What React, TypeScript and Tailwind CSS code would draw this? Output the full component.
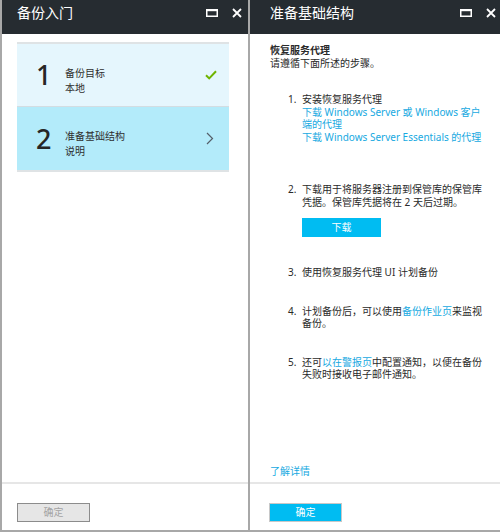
import type { ReactNode } from 'react'

const font = { fontFamily: '"Noto Sans", "Noto Sans CJK SC", sans-serif' }

function PanelHeader({ title, padLeft }: { title: string; padLeft: string }) {
  return (
    <div className={`flex h-[34px] shrink-0 items-center justify-between bg-[#262c31] pr-[6px] ${padLeft}`}>
      <span className="text-[14px] leading-[18px] text-white -mt-[8px]">{title}</span>
      <div className="flex items-center gap-[14px] -mt-[8px]">
        <svg width="12" height="8" viewBox="0 0 12 8">
          <rect x="0.75" y="0.75" width="10.5" height="6.5" fill="none" stroke="#fff" strokeWidth="1.5" />
          <rect x="0" y="0" width="12" height="2.2" fill="#fff" />
        </svg>
        <svg width="10" height="10" viewBox="0 0 10 10">
          <path d="M1 1L9 9M9 1L1 9" stroke="#fff" strokeWidth="1.8" />
        </svg>
      </div>
    </div>
  )
}

function Footer({ children, padLeft }: { children: ReactNode; padLeft: string }) {
  return (
    <div className={`h-[48px] shrink-0 border-t-2 border-[#e6e6e6] pt-[14px] ${padLeft}`}>{children}</div>
  )
}

function StepCard({
  num,
  title,
  sub,
  bg,
  icon,
}: {
  num: string
  title: string
  sub: string
  bg: string
  icon: ReactNode
}) {
  return (
    <div className={`flex h-[63px] items-center pl-[19px] pr-[12px] ${bg}`}>
      <span className="w-[29px] text-[27px] font-medium leading-[30px] text-[#262626]">{num}</span>
      <div className="flex-1 pt-[11px] text-[10px] leading-[15px] text-[#2e2e2e]">
        <div>{title}</div>
        <div>{sub}</div>
      </div>
      {icon}
    </div>
  )
}

function Item({ n, children, className = '' }: { n: string; children: ReactNode; className?: string }) {
  return (
    <li className={`flex ${className}`}>
      <span className="w-[14px] shrink-0">{n}</span>
      <div className="whitespace-nowrap">{children}</div>
    </li>
  )
}

const link = 'text-[#17a9e1]'

export default function App() {
  return (
    <div style={font} className="flex h-[532px] w-[500px] border-b-2 border-[#a8a8a8] bg-white">
      {/* left blade */}
      <div className="flex w-[250px] shrink-0 flex-col border-x-2 border-[#a8a8a8]">
        <PanelHeader title="备份入门" padLeft="pl-[15px]" />
        <div className="flex-1 px-[15px] pt-[8px]">
          <div className="w-[212px] border-y-2 border-[#dfe3e5]">
            <StepCard
              num="1"
              title="备份目标"
              sub="本地"
              bg="bg-[#e5f6fd] border-b border-[#d3dde2]"
              icon={
                <svg width="12" height="10" viewBox="0 0 12 10">
                  <path d="M1 5.2L4.2 8.4L11 1.2" fill="none" stroke="#6fb400" strokeWidth="2" />
                </svg>
              }
            />
            <StepCard
              num="2"
              title="准备基础结构"
              sub="说明"
              bg="bg-[#b3ebfa]"
              icon={
                <svg width="8" height="13" viewBox="0 0 8 13" className="mr-[3px]">
                  <path d="M1 1L6.5 6.5L1 12" fill="none" stroke="#555f69" strokeWidth="1.2" />
                </svg>
              }
            />
          </div>
        </div>
        <Footer padLeft="pl-[15px]">
          <button className="h-[19px] w-[73px] border border-[#8c8c8c] bg-[#e6e6e6] text-[10px] leading-[17px] text-[#a3a3a3]">
            确定
          </button>
        </Footer>
      </div>

      {/* right blade */}
      <div className="flex flex-1 flex-col border-r-2 border-[#a8a8a8]">
        <PanelHeader title="准备基础结构" padLeft="pl-[20px]" />
        <div className="flex flex-1 flex-col px-[20px] pt-[10px] text-[10px] leading-[12.5px] text-[#2a2a2a]">
          <p className="font-bold">恢复服务代理</p>
          <p>请遵循下面所述的步骤。</p>
          <ol className="ml-[18px] mt-[24px]">
            <Item n="1.">
              <div>安装恢复服务代理</div>
              <div className={link}>
                下载 Windows Server 或 Windows 客户
                <br />
                端的代理
              </div>
              <div className={link}>下载 Windows Server Essentials 的代理</div>
            </Item>
            <Item n="2." className="mt-[40px]">
              <div>下载用于将服务器注册到保管库的保管库</div>
              <div>凭据。保管库凭据将在 2 天后过期。</div>
              <button className="mt-[10px] h-[19px] w-[79px] bg-[#00bcf2] text-[10px] text-white">下载</button>
            </Item>
            <Item n="3." className="mt-[29px]">
              使用恢复服务代理 UI 计划备份
            </Item>
            <Item n="4." className="mt-[26px]">
              <div>
                计划备份后，可以使用<span className={link}>备份作业页</span>来监视
              </div>
              <div>备份。</div>
            </Item>
            <Item n="5." className="mt-[26px]">
              <div>
                还可<span className={link}>以在警报页</span>中配置通知，以便在备份
              </div>
              <div>失败时接收电子邮件通知。</div>
            </Item>
          </ol>
          <a className={`mt-auto mb-[5px] ${link}`}>了解详情</a>
        </div>
        <Footer padLeft="pl-[19px]">
          <button className="h-[19px] w-[73px] border border-[#c8c8c8] bg-[#00bcf2] text-[10px] leading-[17px] text-white">
            确定
          </button>
        </Footer>
      </div>
    </div>
  )
}
